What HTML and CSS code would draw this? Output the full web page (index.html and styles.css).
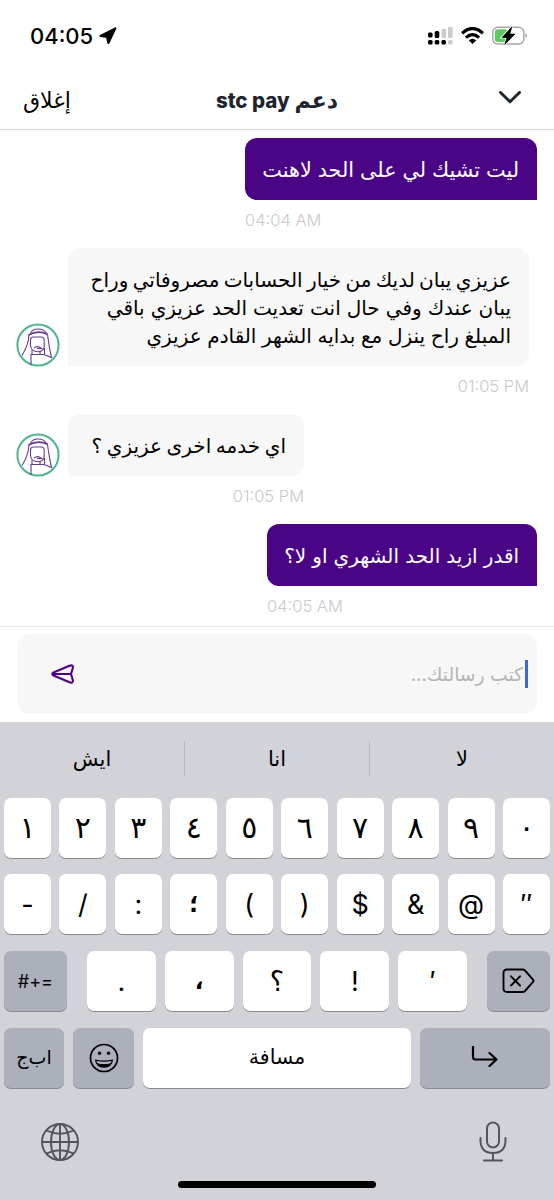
FILE: index.html
```html
<!DOCTYPE html>
<html lang="ar">
<head>
  <meta charset="UTF-8" />
  <meta name="viewport" content="width=device-width, initial-scale=1.0"/>
  <title>دعم stc pay</title>
  <link rel="stylesheet" href="styles.css">
</head>
<body>

  <div class="statusbar">
    <div class="clock">
      <span>04:05</span>
      <svg width="18" height="18" viewBox="0 0 18 18"><path d="M16.400 1.400 9.400 16 8 10 1.400 8.900Z" fill="#000" stroke="#000" stroke-width="2" stroke-linejoin="round"/></svg>
    </div>
    <div class="status-icons">
      <svg width="25" height="18" viewBox="0 0 25 18">
        <g fill="#ccc"><rect x="13.500" y="2" width="4.600" height="9" rx="1"/><rect x="20" y="0" width="4.600" height="11" rx="1"/><rect x="20" y="13" width="4.600" height="4.600" rx="1.500"/></g>
        <rect x="0" y="5.500" width="4.600" height="5" rx="1.500"/><rect x="6.700" y="4" width="4.600" height="7" rx="1.500"/>
        <rect x="0" y="13" width="4.600" height="4.600" rx="1.500"/><rect x="6.700" y="13" width="4.600" height="4.600" rx="1.500"/><rect x="13.400" y="13" width="4.600" height="4.600" rx="1.500"/>
      </svg>
      <svg width="23" height="17" viewBox="0 0 23 17">
        <g fill="none" stroke="#000" stroke-width="3.200"><path d="M1 6.200Q11.500-3.200 22 6.200"/><path d="M4.900 10.600Q11.500 4.600 18.100 10.600"/></g>
        <path d="M7.800 13.400Q11.500 10.300 15.200 13.400L11.500 16.900Z"/>
      </svg>
      <svg width="36" height="20" viewBox="0 0 36 20">
        <rect x=".8" y="1.200" width="31" height="16.800" rx="5" fill="#fff" stroke="#a5a5a5" stroke-width="1.400"/>
        <rect x="2.800" y="3.200" width="13" height="12.800" rx="3" fill="#5fc963"/>
        <path d="M33.500 7Q36.500 9.600 33.500 12.200Z" fill="#999"/>
        <path d="M19.800 1 10.200 11.400H15L12.800 18.400 23 8H17.800Z" stroke="#fff" stroke-width="2.200" paint-order="stroke"/>
        <path d="M19.800 1 10.200 11.400H15L12.800 18.400 23 8H17.800Z" stroke="#000" stroke-width=".6"/>
      </svg>
    </div>
  </div>

  <div class="header">
    <span class="close" dir="rtl">إغلاق</span>
    <span class="title" dir="rtl">دعم <b>stc pay</b></span>
    <svg class="chevron" width="24" height="15" viewBox="0 0 24 15"><path d="M2.500 1.500 12 10.800 21.500 1.500" fill="none" stroke="#1d252d" stroke-width="3" stroke-linecap="round" stroke-linejoin="round"/></svg>
  </div>

  <div class="chat">
    <div class="msg me">
      <div class="bubble w-first" dir="rtl">ليت تشيك لي على الحد لاهنت</div>
      <div class="time">04:04 AM</div>
    </div>

    <div class="msg agent">
      <svg class="avatar" width="44" height="44" viewBox="0 0 44 44">
        <circle cx="22" cy="22" r="20.600" fill="#fff" stroke="#4fb58a" stroke-width="2"/>
        <g fill="none" stroke="#673a91" stroke-width="1.100">
          <path d="M14.500 10Q16.500 6 22 6 28.500 6 30.500 10.500"/>
          <path d="M12.500 12Q22 6.500 32 11.500" stroke-width="1.900"/>
          <path d="M13 12Q12.500 22 6 32.500M31.500 11.500Q33 24 35.500 34.500L28 31.500H15V42"/>
          <path d="M17.500 14H25.500Q28 14 28.200 17V23Q28 28.500 22 28.700 15 28.500 14.500 22.500V17Q14.500 14 17.500 14Z"/>
          <path d="M18 25Q22 22 25.500 25.500H21M16 27V31M28.500 25V31M24 28V31"/>
        </g>
      </svg>
      <div class="stack w-long">
        <div class="bubble" dir="rtl"><span class="l1">عزيزي يبان لديك من خيار الحسابات مصروفاتي وراح</span><br><span class="l2">يبان عندك وفي حال انت تعديت الحد عزيزي باقي</span><br><span class="l3">المبلغ راح ينزل مع بدايه الشهر القادم عزيزي</span></div>
        <div class="time">01:05 PM</div>
      </div>
    </div>

    <div class="msg agent">
      <svg class="avatar" width="44" height="44" viewBox="0 0 44 44">
        <circle cx="22" cy="22" r="20.600" fill="#fff" stroke="#4fb58a" stroke-width="2"/>
        <g fill="none" stroke="#673a91" stroke-width="1.100">
          <path d="M14.500 10Q16.500 6 22 6 28.500 6 30.500 10.500"/>
          <path d="M12.500 12Q22 6.500 32 11.500" stroke-width="1.900"/>
          <path d="M13 12Q12.500 22 6 32.500M31.500 11.500Q33 24 35.500 34.500L28 31.500H15V42"/>
          <path d="M17.500 14H25.500Q28 14 28.200 17V23Q28 28.500 22 28.700 15 28.500 14.500 22.500V17Q14.500 14 17.500 14Z"/>
          <path d="M18 25Q22 22 25.500 25.500H21M16 27V31M28.500 25V31M24 28V31"/>
        </g>
      </svg>
      <div class="stack w-short">
        <div class="bubble" dir="rtl">اي خدمه اخرى عزيزي ؟</div>
        <div class="time">01:05 PM</div>
      </div>
    </div>

    <div class="msg me">
      <div class="bubble w-last" dir="rtl">اقدر ازيد الحد الشهري او لا؟</div>
      <div class="time">04:05 AM</div>
    </div>
  </div>

  <div class="composer">
    <div class="field">
      <svg width="26" height="22" viewBox="0 0 26 22"><path d="M3.500 9.500 19.500 2.700Q22.800 1.500 23 4.500L21 11 23 17.500Q22.800 20.500 19.500 19.300L3.500 12.500Q1 11 3.500 9.500ZM3 11H21" fill="none" stroke="#4f008c" stroke-width="2.100" stroke-linejoin="round"/></svg>
      <span class="placeholder" dir="rtl">كتب رسالتك...</span>
      <span class="caret"></span>
    </div>
  </div>

  <div class="keyboard">
    <div class="suggestions">
      <span>ايش</span>
      <span>انا</span>
      <span>لا</span>
    </div>

    <div class="row ten digits">
      <span class="key">١</span><span class="key">٢</span><span class="key">٣</span><span class="key">٤</span><span class="key">٥</span><span class="key">٦</span><span class="key">٧</span><span class="key">٨</span><span class="key">٩</span><span class="key">٠</span>
    </div>

    <div class="row ten">
      <span class="key">-</span><span class="key">/</span><span class="key">:</span><span class="key heavy">؛</span><span class="key">(</span><span class="key">)</span><span class="key">$</span><span class="key">&amp;</span><span class="key">@</span><span class="key">″</span>
    </div>

    <div class="row punct">
      <span class="key dark sym">#+=</span>
      <span class="key">.</span>
      <span class="key heavy">،</span>
      <span class="key">؟</span>
      <span class="key">!</span>
      <span class="key">′</span>
      <span class="key dark"><svg width="34" height="26" viewBox="0 0 34 26"><path d="M5 1.500H20.500Q22 1.500 23 2.500L31 11.500Q32 12.800 31 14L23 23Q22 24 20.500 24H5Q1.500 24 1.500 20.500V5Q1.500 1.500 5 1.500ZM9 8.300 18 17.500M18 8.300 9 17.500" fill="none" stroke="#000" stroke-width="1.900" stroke-linecap="round"/></svg></span>
    </div>

    <div class="row bottom">
      <span class="key dark abc" dir="rtl">اب‌ج</span>
      <span class="key dark"><svg width="30" height="30" viewBox="0 0 30 30"><circle cx="15" cy="15" r="13.500" fill="none" stroke="#000" stroke-width="1.700"/><circle cx="10.600" cy="10.300" r="1.700"/><circle cx="19.500" cy="10.300" r="1.700"/><path d="M5.800 16.500Q15 18.500 24.200 16.500 23 24.700 15 24.800 7 24.700 5.800 16.500Z" fill="#000"/><path d="M7.500 18Q15 19.500 22.500 18 22.300 19.500 21.500 20.200 15 22 8.500 20.200 7.700 19.500 7.500 18Z" fill="#b0b4be"/></svg></span>
      <span class="key space" dir="rtl">مسافة</span>
      <span class="key dark"><svg width="28" height="24" viewBox="0 0 28 24"><path d="M2 .5V11Q2 13.500 4.500 13.500H25.500M18.500 7 25.500 13.500 18.500 20" fill="none" stroke="#000" stroke-width="2.200" stroke-linecap="round" stroke-linejoin="round"/></svg></span>
    </div>

    <div class="tools">
      <svg width="40" height="40" viewBox="0 0 40 40"><g fill="none" stroke="#53565c" stroke-width="1.900"><circle cx="20" cy="20" r="18"/><ellipse cx="20" cy="20" rx="9" ry="18"/><path d="M20 2V38M2 20H38M6.500 8.500Q20 15 33.500 8.500M6.500 31.500Q20 25 33.500 31.500"/></g></svg>
      <svg width="28" height="42" viewBox="0 0 28 42"><g fill="none" stroke="#53565c" stroke-width="2" stroke-linecap="round"><rect x="8" y="1.500" width="12" height="25" rx="6"/><path d="M1.500 17V20Q2 32 14 32 26 32 26.500 20V17M14 32V39.500M5 39.500H23"/></g></svg>
    </div>
    <div class="home"></div>
  </div>

</body>
</html>
```
FILE: styles.css
```css
* {
  box-sizing: border-box;
}
body {
  margin: 0;
  width: 554px;
  height: 1200px;
  overflow: hidden;
  background: #fff;
  color: #000;
  font-family: Inter, 'DejaVu Sans', sans-serif;
}
svg {
  display: block;
  flex: none;
}
.statusbar {
  display: flex;
  justify-content: space-between;
  align-items: center;
  height: 71px;
  padding: 0 26px 0 30px;
}
.clock {
  display: flex;
  align-items: center;
  gap: 6px;
  font-size: 22px;
  font-weight: 500;
}
.status-icons {
  display: flex;
  align-items: center;
  gap: 8px;
}
.header {
  display: grid;
  grid-template-columns: 1fr auto 1fr;
  align-items: center;
  height: 59px;
  padding: 0 23px;
  border-bottom: 1px solid #d8d8da;
}
.close {
  justify-self: start;
  font-size: 22px;
  line-height: 24px;
}
.title {
  font-size: 22px;
  line-height: 24px;
  font-weight: 800;
  color: #1d252d;
}
.title b {
  font-size: 20.500px;
  font-weight: 800;
}
.chevron {
  justify-self: end;
  margin: 0 9px 4px 0;
}
.chat {
  height: 496px;
  padding: 8px 17px 0;
}
.msg {
  display: flex;
  margin-bottom: 18px;
}
.me {
  flex-direction: column;
  align-items: flex-end;
}
.agent {
  align-items: flex-start;
  gap: 8px;
}
.avatar {
  margin-left: -1px;
}
.bubble {
  padding: 18px 18px 16px;
  border-radius: 12px;
  font-size: 20px;
  line-height: 28px;
  white-space: nowrap;
}
.me .bubble {
  background: #4a0587;
  color: #fff;
  border-bottom-right-radius: 0;
}
.agent .bubble {
  background: #f7f7f7;
  border-bottom-left-radius: 0;
}
.bubble span {
  line-height: 20px;
}
.l1 {
  word-spacing: -1.300px;
}
.l2 {
  word-spacing: 0.400px;
}
.w-first, .w-first + .time {
  width: 292px;
}
.me .w-first {
  font-size: 20.800px;
}
.w-last, .w-last + .time {
  width: 270px;
}
.w-last {
  word-spacing: 0.500px;
}
.w-long {
  width: 461px;
}
.w-short {
  width: 236px;
}
.w-short .bubble {
  word-spacing: -1px;
}
.agent .avatar {
  margin-top: auto;
  margin-bottom: 29px;
}
.time {
  height: 30px;
  padding-top: 8px;
  line-height: 24px;
  font-size: 16.500px;
  font-weight: 300;
  color: #c8c9ce;
}
.agent .time {
  text-align: right;
}
.composer {
  height: 96px;
  padding: 7px 17px 9px;
  border-top: 1px solid #e4e5e9;
}
.field {
  display: flex;
  align-items: center;
  height: 80px;
  padding: 0 9px 0 33px;
  border-radius: 13px;
  background: #f7f7f7;
}
.placeholder {
  margin-left: auto;
  font-size: 18.800px;
  color: #b5b5b5;
}
.caret {
  width: 3px;
  height: 28px;
  margin-left: 2px;
  background: #4463d8;
}
.keyboard {
  height: 478px;
  background: #d1d3d9;
}
.suggestions {
  display: flex;
  height: 75.500px;
  padding-top: 19px;
}
.suggestions span {
  flex: 1;
  height: 35px;
  line-height: 35px;
  text-align: center;
  font-size: 21px;
}
.suggestions span + span {
  border-left: 1px solid #b6b8bf;
}
.row {
  display: grid;
  gap: 8.500px;
  height: 60px;
  margin-bottom: 16.800px;
  padding: 0 4px;
}
.ten {
  grid-template-columns: repeat(10, 1fr);
}
.punct {
  display: flex;
  gap: 9px;
}
.punct .key {
  width: 69px;
}
.punct .dark {
  width: 63px;
}
.punct .key:first-child {
  margin-right: 11px;
}
.punct .key:last-child {
  margin-left: 11px;
}
.bottom {
  grid-template-columns: 60px 61px 1fr 130px;
  column-gap: 9px;
}
.key {
  display: flex;
  align-items: center;
  justify-content: center;
  border-radius: 7px;
  background: #fff;
  box-shadow: 0 1px 0 #898a8e;
  font-size: 27px;
}
.digits .key {
  padding-bottom: 2px;
  font-size: 30px;
}
.dark {
  background: #abb0bb;
}
.heavy {
  font-size: 23px;
  font-weight: 700;
}
.key.sym {
  font-size: 18px;
}
.key.abc {
  font-size: 19px;
}
.key.space {
  padding-bottom: 3px;
  font-size: 20.500px;
}
.tools {
  display: flex;
  justify-content: space-between;
  align-items: center;
  height: 42px;
  margin-top: 33.500px;
  padding: 0 47px 0 40px;
}
.home {
  width: 198px;
  height: 7px;
  margin: 18px auto 0;
  border-radius: 4px;
  background: #000;
}
```
